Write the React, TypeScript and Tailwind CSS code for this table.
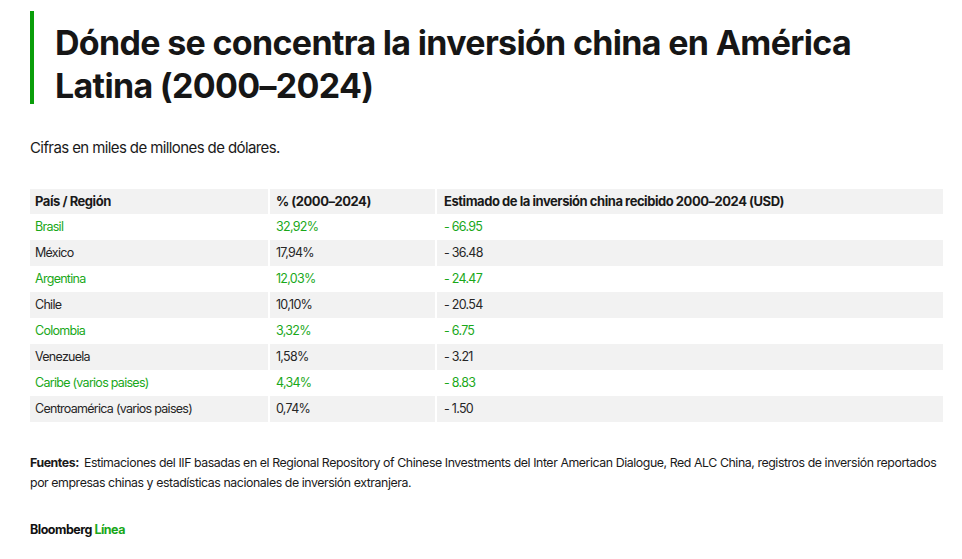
const rows = [
  { name: 'Brasil', pct: '32,92%', usd: '- 66.95', green: true },
  { name: 'México', pct: '17,94%', usd: '- 36.48', green: false },
  { name: 'Argentina', pct: '12,03%', usd: '- 24.47', green: true },
  { name: 'Chile', pct: '10,10%', usd: '- 20.54', green: false },
  { name: 'Colombia', pct: '3,32%', usd: '- 6.75', green: true },
  { name: 'Venezuela', pct: '1,58%', usd: '- 3.21', green: false },
  { name: 'Caribe (varios paises)', pct: '4,34%', usd: '- 8.83', green: true },
  { name: 'Centroamérica (varios paises)', pct: '0,74%', usd: '- 1.50', green: false },
]

export default function App() {
  return (
    <div className="w-[962px] h-[559px] bg-white text-[#1a1a1a] font-['Inter',sans-serif] pl-[30px] pr-[19px] pt-[11px]">
      <div className="flex">
        <div className="w-[4px] h-[93px] bg-[#0a9e0a]" />
        <h1 className="ml-[21px] mt-[10px] text-[34px] leading-[43px] font-bold tracking-[-0.02em] text-[#161616]">
          Dónde se concentra la inversión china en América
          <br />
          Latina (2000–2024)
        </h1>
      </div>

      <p className="mt-[31px] text-[15px] leading-[20px] tracking-[-0.04em] text-[#1a1a1a]">
        Cifras en miles de millones de dólares.
      </p>

      <div className="mt-[31px] tracking-[-0.045em]">
        <div className="grid grid-cols-[240px_167px_1fr] h-[25px] bg-[#f2f2f2] font-bold items-center text-[13px] tracking-[-0.035em]">
          <div className="pl-[5px] border-r-2 border-white h-full flex items-center">País / Región</div>
          <div className="pl-[6px] border-r-2 border-white h-full flex items-center">% (2000–2024)</div>
          <div className="pl-[7px]">Estimado de la inversión china recibido 2000–2024 (USD)</div>
        </div>
        {rows.map((r, i) => (
          <div
            key={r.name}
            className={`grid grid-cols-[240px_167px_1fr] h-[26px] items-center text-[12.5px] ${i % 2 === 1 ? 'bg-[#f2f2f2]' : 'bg-white'} ${r.green ? 'text-[#1aa81a]' : 'text-[#262626]'}`}
          >
            <div className="pl-[5px] border-r-2 border-white h-full flex items-center">{r.name}</div>
            <div className="pl-[6px] border-r-2 border-white h-full flex items-center">{r.pct}</div>
            <div className="pl-[7px]">{r.usd}</div>
          </div>
        ))}
      </div>

      <p className="mt-[31px] text-[12.35px] leading-[20px] tracking-[-0.035em] text-[#1a1a1a]">
        <span className="font-bold mr-[5px]">Fuentes:</span>
        Estimaciones del IIF basadas en el Regional Repository of Chinese Investments del Inter American Dialogue, Red ALC China, registros de inversión reportados por empresas chinas y estadísticas nacionales de inversión extranjera.
      </p>

      <div className="mt-[28px] text-[12.5px] font-bold tracking-[-0.04em]">
        <span className="text-[#111]">Bloomberg</span> <span className="text-[#1aa81a]">Línea</span>
      </div>
    </div>
  )
}
